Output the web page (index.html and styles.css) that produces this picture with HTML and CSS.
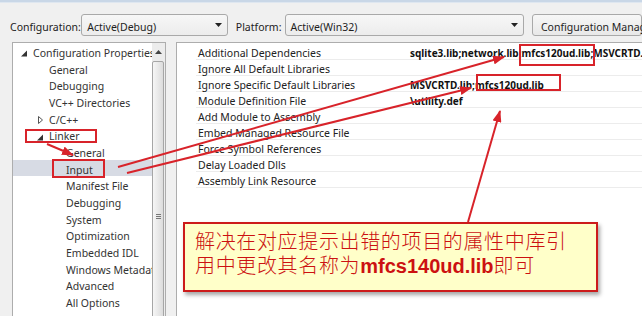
FILE: index.html
```html
<!DOCTYPE html>
<html>
<head>
<meta charset="utf-8">
<link rel="stylesheet" href="styles.css">
</head>
<body>
<div class="page">
  <div class="topline"></div>
  <div class="toolbar">
    <span class="lbl lbl-config">Configuration:</span>
    <div class="combo combo-config">
      <span class="combo-text">Active(Debug)</span>
      <svg class="drop" width="7" height="4" viewBox="0 0 7 4"><path d="M0 0H7L3.5 4Z" fill="#222"/></svg>
    </div>
    <span class="lbl lbl-plat">Platform:</span>
    <div class="combo combo-plat">
      <span class="combo-text">Active(Win32)</span>
      <svg class="drop" width="7" height="4" viewBox="0 0 7 4"><path d="M0 0H7L3.5 4Z" fill="#222"/></svg>
    </div>
    <div class="btn"><span class="combo-text">Configuration Manager...</span></div>
  </div>

  <div class="main">
    <div class="tree">
      <ul class="tree-list">
        <li class="node l0"><svg class="tw" width="14" height="8" viewBox="0 0 14 8"><path d="M8 1.5V7.5H2Z" fill="#333"/></svg>Configuration Properties</li>
        <li class="node l1">General</li>
        <li class="node l1">Debugging</li>
        <li class="node l1">VC++ Directories</li>
        <li class="node l1"><svg class="tw" width="14" height="8" viewBox="0 0 14 8"><path d="M3.5 0.5L7.5 4L3.5 7.5Z" fill="none" stroke="#555" stroke-width="1"/></svg>C/C++</li>
        <li class="node l1"><svg class="tw" width="14" height="8" viewBox="0 0 14 8"><path d="M8 1.5V7.5H2Z" fill="#333"/></svg>Linker</li>
        <li class="node l2">General</li>
        <li class="node l2 selected">Input</li>
        <li class="node l2">Manifest File</li>
        <li class="node l2">Debugging</li>
        <li class="node l2">System</li>
        <li class="node l2">Optimization</li>
        <li class="node l2">Embedded IDL</li>
        <li class="node l2">Windows Metadata</li>
        <li class="node l2">Advanced</li>
        <li class="node l2">All Options</li>
      </ul>
      <div class="vscroll">
        <div class="vs-up"><svg width="7" height="4" viewBox="0 0 7 4"><path d="M0 4H7L3.5 0Z" fill="#444"/></svg></div>
        <div class="vs-thumb"><span class="grip"></span></div>
      </div>
    </div>

    <div class="grid">
      <div class="row"><span class="gut"></span><span class="name">Additional Dependencies</span><span class="val">sqlite3.lib;network.lib;mfcs120ud.lib;MSVCRTD.lib</span></div>
      <div class="row"><span class="gut"></span><span class="name">Ignore All Default Libraries</span><span class="val"></span></div>
      <div class="row"><span class="gut"></span><span class="name">Ignore Specific Default Libraries</span><span class="val">MSVCRTD.lib;mfcs120ud.lib</span></div>
      <div class="row"><span class="gut"></span><span class="name">Module Definition File</span><span class="val">\utility.def</span></div>
      <div class="row"><span class="gut"></span><span class="name">Add Module to Assembly</span><span class="val"></span></div>
      <div class="row"><span class="gut"></span><span class="name">Embed Managed Resource File</span><span class="val"></span></div>
      <div class="row"><span class="gut"></span><span class="name">Force Symbol References</span><span class="val"></span></div>
      <div class="row"><span class="gut"></span><span class="name">Delay Loaded Dlls</span><span class="val"></span></div>
      <div class="row"><span class="gut"></span><span class="name">Assembly Link Resource</span><span class="val"></span></div>
    </div>
  </div>

  <svg class="annot" width="642" height="316" viewBox="0 0 642 316">
    <defs>
      <marker id="ah" viewBox="0 0 12 9" refX="11" refY="4.5" markerWidth="6" markerHeight="4.5" orient="auto">
        <path d="M0 0L12 4.5L0 9Z" fill="#d8232a"/>
      </marker>
    </defs>
    <g fill="none" stroke="#d8232a" stroke-width="2">
      <rect x="520" y="45" width="74" height="20"/>
      <rect x="477" y="75" width="83" height="15"/>
      <rect x="26" y="130" width="70" height="12"/>
      <rect x="53" y="160" width="51" height="17"/>
      <line x1="118" y1="167" x2="504" y2="57" marker-end="url(#ah)"/>
      <line x1="127" y1="173" x2="471" y2="88" marker-end="url(#ah)"/>
      <line x1="47" y1="144" x2="73" y2="155" marker-end="url(#ah)"/>
      <line x1="468" y1="222" x2="500" y2="111" marker-end="url(#ah)"/>
    </g>
  </svg>

  <div class="callout">解决在对应提示出错的项目的属性中库引<br>用中更改其名称为<b class="lib">mfcs140ud.lib</b>即可</div>
</div>
</body>
</html>
```

FILE: styles.css
```css
* { box-sizing: border-box; }
html, body { margin: 0; padding: 0; }
body {
  width: 642px;
  height: 316px;
  overflow: hidden;
  background: #f0f0f0;
  font-family: "Noto Sans", "Open Sans", sans-serif;
  font-size: 10.5px;
  color: #1e1e1e;
}
.page {
  position: relative;
  width: 642px;
  height: 316px;
  overflow: hidden;
}
.topline {
  height: 3px;
  background: #c9d7e7;
  border-bottom: 1px solid #dfe7f0;
}
.toolbar {
  display: flex;
  align-items: center;
  height: 22px;
  margin-top: 11px;
  padding-left: 10px;
  white-space: nowrap;
}
.lbl { color: #222; padding-top: 3px; }
.lbl-config { width: 79px; }
.lbl-plat { width: 54px; margin-left: 8px; }
.combo {
  display: flex;
  align-items: center;
  height: 22px;
  border: 1px solid #a9a9a9;
  border-radius: 3px;
  background: linear-gradient(#f7f7f7, #ececec);
  padding-left: 5px;
  padding-right: 5px;
}
.combo-text { flex: 1; padding-top: 3px; }
.combo-config { width: 161px; }
.combo-plat { width: 264px; }
.btn {
  display: flex;
  align-items: center;
  height: 22px;
  width: 110px;
  margin-left: 8px;
  border: 1px solid #a9a9a9;
  border-radius: 3px;
  background: linear-gradient(#f7f7f7, #e8e8e8);
  padding-left: 8px;
  flex-shrink: 0;
}
.main {
  display: flex;
  gap: 10px;
  margin-top: 6px;
  padding-left: 12px;
  height: 290px;
}
.tree {
  width: 154px;
  flex-shrink: 0;
  display: flex;
  background: #fff;
  border: 1px solid #adadad;
  border-bottom: none;
}
.tree-list {
  list-style: none;
  margin: 0;
  padding: 0;
  width: 139px;
  overflow: hidden;
  white-space: nowrap;
}
.node {
  height: 16.67px;
  line-height: 16.67px;
  padding-top: 4px;
  color: #333;
  display: flex;
  align-items: center;
}
.l0 { padding-left: 20px; }
.l1 { padding-left: 36px; }
.l2 { padding-left: 53px; }
.tw { margin-left: -14px; flex-shrink: 0; }
.selected { background: #d7dbe4; }
.vscroll {
  width: 13px;
  background: #ececec;
  display: flex;
  flex-direction: column;
}
.vs-up {
  height: 17px;
  display: flex;
  align-items: center;
  justify-content: center;
}
.vs-thumb {
  margin: 1px 1px 0 0;
  flex: 1;
  border: 1px solid #a6a6a6;
  border-radius: 2px;
  background: linear-gradient(90deg, #f6f6f6, #dcdcdc);
  display: flex;
  justify-content: center;
  padding-top: 152px;
}
.grip {
  width: 5px;
  height: 5px;
  border-top: 1px solid #777;
  border-bottom: 1px solid #777;
}
.grip::after {
  content: "";
  display: block;
  margin-top: 1px;
  border-top: 1px solid #777;
}
.grid {
  flex: 1;
  background: #fff;
  border-top: 1px solid #adadad;
  border-left: 1px solid #adadad;
  padding-top: 1px;
  overflow: hidden;
}
.row {
  display: flex;
  height: 16px;
  padding-top: 3px;
  line-height: 13px;
  white-space: nowrap;
}
.gut { width: 19px; flex-shrink: 0; }
.name {
  width: 213px;
  flex-shrink: 0;
  padding-left: 2px;
  border-bottom: 1px solid #ececec;
  color: #222;
}
.val {
  flex: 1;
  border-bottom: 1px solid #ececec;
  padding-left: 1px;
  font-weight: 700;
  font-size: 10px;
  color: #111;
}
.annot {
  position: absolute;
  left: 0;
  top: 0;
}
.callout {
  position: absolute;
  left: 183px;
  top: 222px;
  width: 415px;
  height: 70px;
  background: #ffffc9;
  border: 2px solid #cc1b1b;
  box-shadow: 2px 3px 4px rgba(0, 0, 0, 0.35);
  padding: 5px 0 0 10px;
  font-family: "Noto Sans CJK SC", sans-serif;
  font-size: 20px;
  font-weight: 300;
  line-height: 24px;
  letter-spacing: 0.65px;
  color: #cc1111;
  white-space: nowrap;
}
.lib {
  font-family: "Liberation Sans", Arial, sans-serif;
  font-weight: 700;
  letter-spacing: 0;
}
```
